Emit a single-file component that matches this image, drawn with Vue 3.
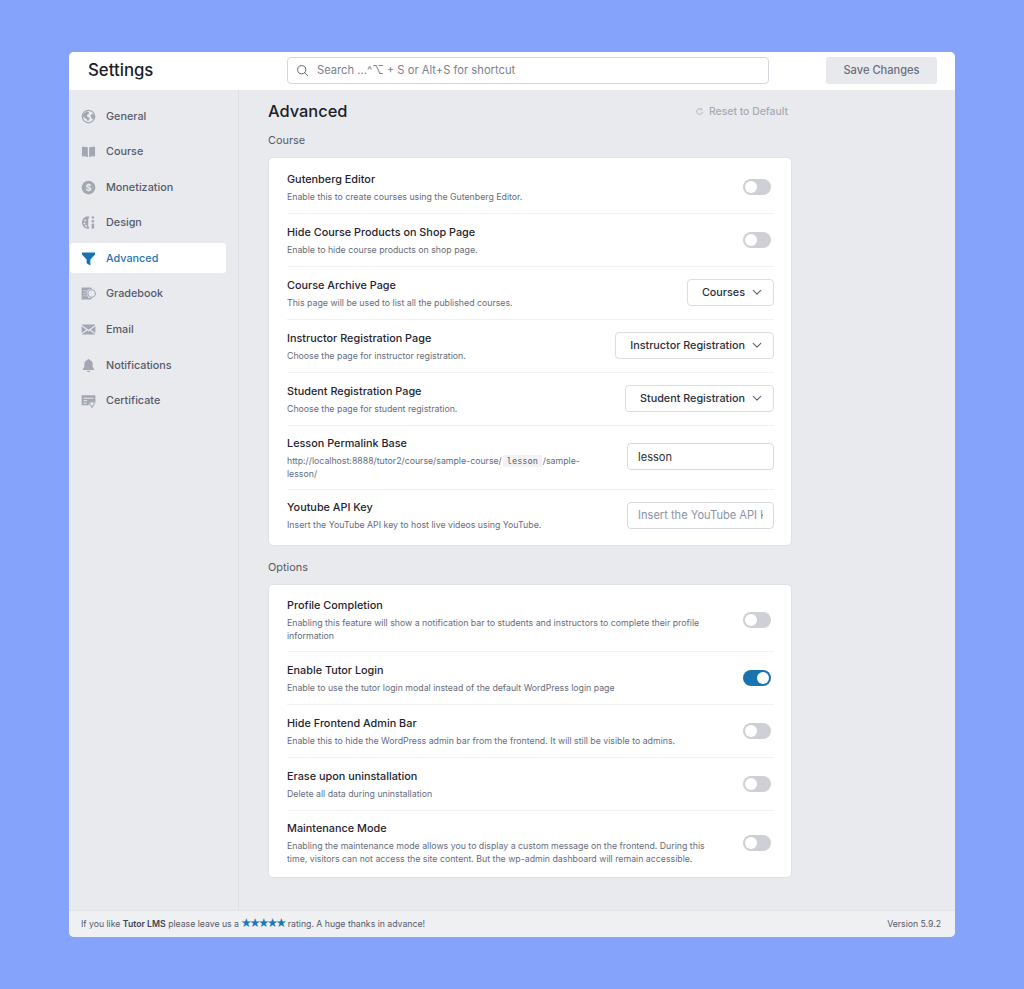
<script setup>
const navItems = [
  { label: 'General', icon: 'globe' },
  { label: 'Course', icon: 'book' },
  { label: 'Monetization', icon: 'coin' },
  { label: 'Design', icon: 'palette' },
  { label: 'Advanced', icon: 'filter', active: true },
  { label: 'Gradebook', icon: 'grade' },
  { label: 'Email', icon: 'mail' },
  { label: 'Notifications', icon: 'bell' },
  { label: 'Certificate', icon: 'cert' }
]

const courseRows = [
  { title: 'Gutenberg Editor', desc: 'Enable this to create courses using the Gutenberg Editor.', type: 'toggle' },
  { title: 'Hide Course Products on Shop Page', desc: 'Enable to hide course products on shop page.', type: 'toggle' },
  { title: 'Course Archive Page', desc: 'This page will be used to list all the published courses.', type: 'select', value: 'Courses' },
  { title: 'Instructor Registration Page', desc: 'Choose the page for instructor registration.', type: 'select', value: 'Instructor Registration' },
  { title: 'Student Registration Page', desc: 'Choose the page for student registration.', type: 'select', value: 'Student Registration' },
  { title: 'Lesson Permalink Base', type: 'input', value: 'lesson', permalink: true },
  { title: 'Youtube API Key', desc: 'Insert the YouTube API key to host live videos using YouTube.', type: 'input', placeholder: 'Insert the YouTube API key', tight: true }
]

const optionRows = [
  { title: 'Profile Completion', desc: 'Enabling this feature will show a notification bar to students and instructors to complete their profile information', type: 'toggle' },
  { title: 'Enable Tutor Login', desc: 'Enable to use the tutor login modal instead of the default WordPress login page', type: 'toggle', on: true },
  { title: 'Hide Frontend Admin Bar', desc: 'Enable this to hide the WordPress admin bar from the frontend. It will still be visible to admins.', type: 'toggle' },
  { title: 'Erase upon uninstallation', desc: 'Delete all data during uninstallation', type: 'toggle' },
  { title: 'Maintenance Mode', desc: 'Enabling the maintenance mode allows you to display a custom message on the frontend. During this time, visitors can not access the site content. But the wp-admin dashboard will remain accessible.', type: 'toggle' }
]

const sections = [
  { name: 'Course', rows: courseRows },
  { name: 'Options', rows: optionRows }
]
</script>

<template>
  <div class="page">
    <div class="window">
      <header class="topbar">
        <h1 class="app-title">Settings</h1>
        <div class="search">
          <svg class="search-icon" viewBox="0 0 16 16" fill="none" stroke="currentColor" stroke-width="1.2">
            <circle cx="7" cy="7" r="5" />
            <path d="M10.7 10.7 14.5 14.5" stroke-linecap="round" />
          </svg>
          <span>Search ...^⌥ + S or Alt+S for shortcut</span>
        </div>
        <button class="save-btn">Save Changes</button>
      </header>

      <div class="body">
        <nav class="sidebar">
          <a v-for="item in navItems" :key="item.label" :class="['nav-item', { active: item.active }]">
            <svg class="nav-icon" viewBox="0 0 24 24" fill="currentColor">
              <template v-if="item.icon === 'globe'">
                <circle cx="12" cy="12" r="10" fill="none" stroke="currentColor" stroke-width="2" />
                <path d="M5 6.500 10 4l3 1.500-1 3-3 1.500 2 3 3 1-1 3-2 3-2-4-5-3-1-3zM15 10l4-3 2.500 5-2 5-2.500-2-1-3z" />
              </template>
              <template v-else-if="item.icon === 'book'">
                <path d="M1.500 4.500c3.500-.6 7-.3 9.500 1.200V21c-2.500-1.500-6-1.800-9.500-1.200zM22.500 4.500c-3.500-.6-7-.3-9.500 1.200V21c2.500-1.500 6-1.800 9.500-1.200z" />
              </template>
              <template v-else-if="item.icon === 'coin'">
                <circle cx="12" cy="12" r="11" />
                <text x="12" y="17" text-anchor="middle" class="coin-sign">$</text>
              </template>
              <template v-else-if="item.icon === 'palette'">
                <path d="M11.500 2C6 2 1.500 6.500 1.500 12S6 22 11.500 22c1 0 1.500-.8 1.500-1.500 0-1.500-1.500-2-1.500-3.500V7c0-1.500 1.500-2 1.500-3.500C13 2.800 12.500 2 11.500 2z" />
                <circle cx="6.500" cy="8.500" r="1.500" fill="#e9eaee" />
                <circle cx="5.500" cy="13.500" r="1.500" fill="#e9eaee" />
                <circle cx="8" cy="17.500" r="1.500" fill="#e9eaee" />
                <circle cx="19" cy="4" r="2" />
                <circle cx="19" cy="10" r="2" />
                <rect x="17" y="13.500" width="4" height="8.500" rx="1.500" />
              </template>
              <template v-else-if="item.icon === 'filter'">
                <path d="M1.500 2.500h21v3L15 13.500V23l-6-3.500v-6L1.500 5.500z" />
              </template>
              <template v-else-if="item.icon === 'grade'">
                <path d="M1 2.500h13c2 0 3 1 3.500 2.500H12.500c-2 1.500-3.500 4-3.500 7s1.500 5.500 3.500 7h5c-.5 1.500-1.500 2.500-3.500 2.500H1z" />
                <circle cx="17" cy="12" r="6" fill="none" stroke="currentColor" stroke-width="1.800" />
                <path d="M4 7h5v1.500H4zM4 11h3v1.500H4zM4 15h4v1.500H4z" fill="#e9eaee" />
              </template>
              <template v-else-if="item.icon === 'mail'">
                <path d="M2.500 4h19c.6 0 1 .2 1.300.6L12 12.500 1.200 4.600c.3-.4.7-.6 1.300-.6zM1 6.800l7.500 5.500L1 17.500zM23 6.800v10.700l-7.500-5.200zM1.300 19.500l8.900-5.800L12 15l1.800-1.300 8.900 5.800c-.3.3-.7.500-1.200.5h-19c-.5 0-.9-.2-1.200-.5z" />
              </template>
              <template v-else-if="item.icon === 'bell'">
                <path d="M12 1.500c1 0 1.700.7 1.700 1.700 3.300.8 5 3.500 5 7v4.300l2.300 3v1.500H3v-1.500l2.300-3v-4.300c0-3.500 1.700-6.200 5-7 0-1 .7-1.700 1.700-1.700zM9.500 20.500h5c0 1.300-1 2.300-2.500 2.300s-2.500-1-2.500-2.300z" />
              </template>
              <template v-else>
                <path d="M1 3.500h22v12.700a6 6 0 0 0-11 3.300H1z" />
                <path d="M4 7.500h16V9H4zM4 11.500h6V13H4zM4 15.500h5V17H4z" fill="#e9eaee" />
                <circle cx="17.500" cy="17.500" r="3.600" fill="none" stroke="currentColor" stroke-width="1.600" />
                <path d="M16 21.500h3V24l-1.500-.8L16 24z" />
              </template>
            </svg>
            <span>{{ item.label }}</span>
          </a>
        </nav>

        <main class="content">
          <div class="content-head">
            <h2 class="page-title">Advanced</h2>
            <span class="reset">
              <svg viewBox="0 0 12 12" fill="none" stroke="currentColor" stroke-width="1">
                <path d="M9.800 6.500A3.800 3.800 0 1 1 8.700 3.300" />
                <path d="M8.900 1.500v2.200H6.900" fill="none" />
              </svg>
              Reset to Default
            </span>
          </div>

          <section v-for="section in sections" :key="section.name" class="section">
            <h3 class="section-title">{{ section.name }}</h3>
            <div class="card">
              <div v-for="row in section.rows" :key="row.title" :class="['row', { tight: row.tight }]">
                <div class="row-text">
                  <div class="row-title">{{ row.title }}</div>
                  <div v-if="row.permalink" class="row-desc">
                    <span>http://localhost:8888/tutor2/course/sample-course/</span>
                    <code class="slug">lesson</code>
                    <span>/sample-</span><br />
                    <span>lesson/</span>
                  </div>
                  <div v-else class="row-desc">{{ row.desc }}</div>
                </div>
                <span v-if="row.type === 'toggle'" :class="['toggle', { on: row.on }]"><i></i></span>
                <div v-else-if="row.type === 'select'" class="select">
                  <span>{{ row.value }}</span>
                  <svg viewBox="0 0 12 8" fill="none" stroke="currentColor" stroke-width="1.300">
                    <path d="M1.500 1.500 6 6l4.500-4.500" stroke-linecap="round" stroke-linejoin="round" />
                  </svg>
                </div>
                <input v-else class="text-input" :value="row.value" :placeholder="row.placeholder" />
              </div>
            </div>
          </section>
        </main>
      </div>

      <footer class="footer">
        <span>If you like <b>Tutor LMS</b> please leave us a <span class="stars">★★★★★</span> rating. A huge thanks in advance!</span>
        <span>Version 5.9.2</span>
      </footer>
    </div>
  </div>
</template>

<style>
body {
  background: #86a3fb;
}
</style>

<style scoped>
.page {
  height: 989px;
  box-sizing: border-box;
  padding: 52px 69px;
  background: #86a3fb;
  font-family: Inter, "Liberation Sans", sans-serif;
}

.window {
  height: 885px;
  display: flex;
  flex-direction: column;
  background: #e9eaee;
  border-radius: 5px;
  overflow: hidden;
}

/* 상단 바 */
.topbar {
  height: 38px;
  box-sizing: border-box;
  flex-shrink: 0;
  display: flex;
  align-items: center;
  padding: 0 18px 2px;
  background: #fff;
}

.app-title {
  width: 199px;
  margin: 0 0 0 1px;
  font-size: 16.800px;
  font-weight: 500;
  color: #1b1f2a;
}

.search {
  width: 482px;
  height: 27px;
  box-sizing: border-box;
  display: flex;
  align-items: center;
  gap: 8px;
  padding-left: 8px;
  border: 1px solid #d5d7dc;
  border-radius: 4px;
  font-size: 11.200px;
  color: #7a7f8c;
}

.search-icon {
  width: 13px;
  height: 13px;
  color: #5b6170;
}

.save-btn {
  width: 111px;
  height: 27px;
  margin-left: auto;
  border: 0;
  border-radius: 3px;
  background: #e8e9ed;
  font: 500 11.100px Inter, "Liberation Sans", sans-serif;
  color: #6b7080;
}

.body {
  flex: 1;
  display: flex;
  min-height: 0;
}

/* 사이드바 */
.sidebar {
  width: 170px;
  box-sizing: border-box;
  flex-shrink: 0;
  padding: 11px 12px 0 1px;
  border-right: 1px solid #e0e1e6;
}

.nav-item {
  height: 30px;
  margin-bottom: 5.600px;
  display: flex;
  align-items: center;
  gap: 10px;
  padding-left: 11px;
  border-radius: 3px;
  font-size: 10.800px;
  font-weight: 500;
  color: #555b6b;
}

.nav-item.active {
  background: #fff;
  color: #1f76b5;
}

.nav-icon {
  width: 15px;
  height: 15px;
  flex-shrink: 0;
  color: #a3a7b3;
}

.nav-item.active .nav-icon {
  color: #1a73b1;
}

.coin-sign {
  font: 700 15px Inter, sans-serif;
  fill: #e9eaee;
}

/* 본문 */
.content {
  width: 524px;
  margin-left: 29px;
}

.content-head {
  height: 40px;
  display: flex;
  align-items: center;
  justify-content: space-between;
  padding-right: 4px;
}

.page-title {
  margin: 1px 0 0;
  font-size: 16.400px;
  font-weight: 500;
  color: #1b1f2a;
}

.reset {
  display: flex;
  align-items: center;
  gap: 5px;
  margin-top: 2px;
  font-size: 10.400px;
  font-weight: 500;
  color: #a6aab5;
}

.reset svg {
  width: 9px;
  height: 9px;
}

.section {
  margin-bottom: 11px;
}

.section-title {
  height: 27px;
  margin: 0;
  font-size: 10.900px;
  font-weight: 400;
  line-height: 21px;
  color: #555b6b;
}

.card {
  padding: 3px 17px 3px 18px;
  background: #fff;
  border: 1px solid #e1e2e7;
  border-radius: 5px;
}

.row {
  min-height: 53px;
  display: flex;
  align-items: center;
  justify-content: space-between;
  gap: 30px;
  padding: 8px 0;
  box-sizing: border-box;
  border-bottom: 1px solid #f1f2f4;
}

.row.tight {
  min-height: 52px;
}

.row:last-child {
  border-bottom: 0;
}

.row-text {
  flex: 1;
  min-width: 0;
  padding-top: 2px;
}

.row.tight .row-text {
  padding-top: 0;
}

.row-title {
  margin-bottom: 4px;
  font-size: 10.850px;
  font-weight: 500;
  line-height: 15px;
  color: #1f2430;
}

.row-desc {
  font-size: 8.770px;
  line-height: 13px;
  color: #666c7b;
}

.slug {
  margin: 0 1px;
  padding: 1px 4px;
  background: #f2f3f4;
  font-family: "DejaVu Sans Mono", "Liberation Mono", monospace;
  font-size: 8.600px;
  color: #555b6b;
}

.toggle {
  width: 28px;
  height: 16px;
  box-sizing: border-box;
  flex-shrink: 0;
  display: flex;
  align-items: center;
  padding: 2px;
  margin-right: 3px;
  border-radius: 8px;
  background: #cfd0d5;
}

.toggle i {
  width: 12px;
  height: 12px;
  border-radius: 50%;
  background: #fff;
}

.toggle.on {
  justify-content: flex-end;
  background: #1a73b1;
}

.select {
  height: 27px;
  box-sizing: border-box;
  flex-shrink: 0;
  display: flex;
  align-items: center;
  gap: 7px;
  margin-bottom: 2px;
  padding: 0 11px 0 14px;
  background: #fff;
  border: 1px solid #dcdde1;
  border-radius: 4px;
  font-size: 10.800px;
  font-weight: 500;
  color: #2b303c;
}

.select svg {
  width: 10px;
  height: 7px;
  color: #5b6170;
}

.text-input {
  width: 147px;
  height: 27px;
  box-sizing: border-box;
  flex-shrink: 0;
  margin-bottom: 2px;
  padding: 0 10px;
  border: 1px solid #d8d9de;
  border-radius: 4px;
  outline: 0;
  font: 400 11.100px Inter, "Liberation Sans", sans-serif;
  color: #2b303c;
}

.text-input::placeholder {
  color: #8d92a3;
}

/* 하단 */
.footer {
  height: 27px;
  flex-shrink: 0;
  display: flex;
  align-items: center;
  justify-content: space-between;
  padding: 0 14px 1px 12px;
  background: #eff0f2;
  border-top: 1px solid #e3e4e8;
  box-sizing: border-box;
  font-size: 8.700px;
  color: #555b6b;
}

.footer b {
  font-weight: 600;
  color: #3f4553;
}

.stars {
  color: #1f76b5;
  font-size: 11px;
  line-height: 1;
  letter-spacing: -2.700px;
  margin: 0 1px 0 -1px;
  vertical-align: -0.500px;
}
</style>
